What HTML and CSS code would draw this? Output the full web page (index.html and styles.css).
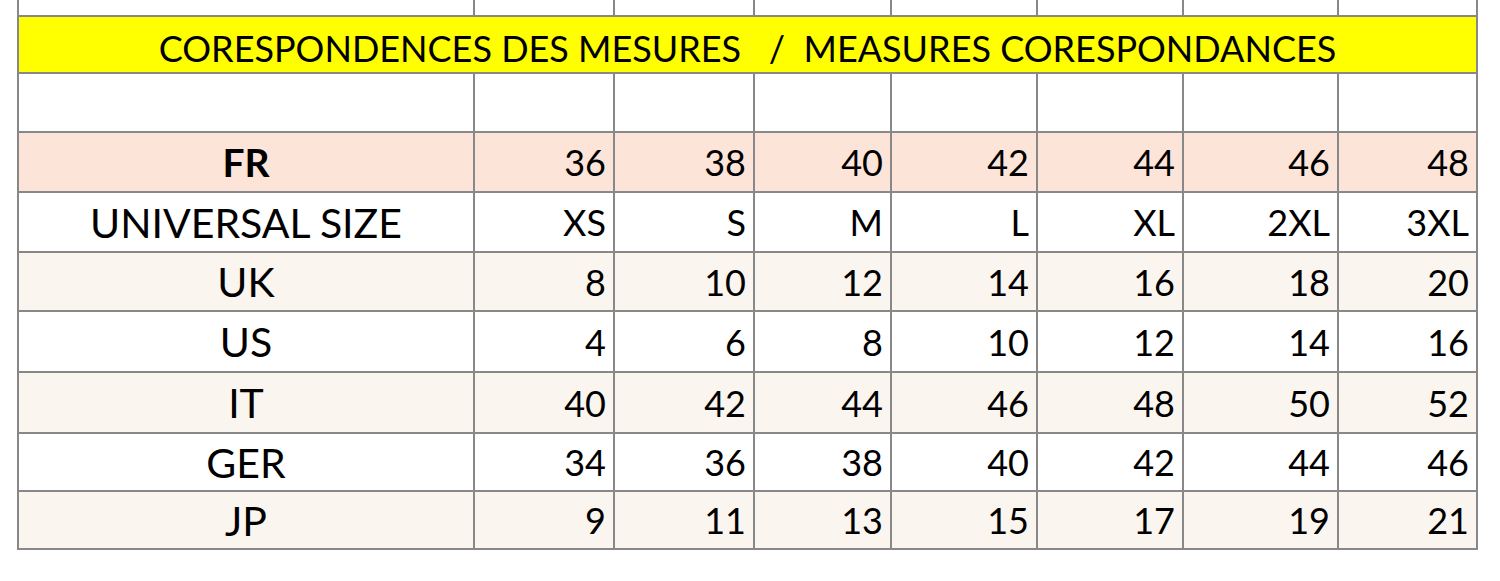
FILE: index.html
```html
<!DOCTYPE html>
<html>
<head>
<meta charset="utf-8">
<link rel="stylesheet" href="styles.css">
</head>
<body>
<table class="sizes">
  <colgroup>
    <col class="c-label"><col class="c1"><col class="c2"><col class="c3"><col class="c4"><col class="c5"><col class="c6"><col class="c7">
  </colgroup>
  <tr class="r-top"><td></td><td></td><td></td><td></td><td></td><td></td><td></td><td></td></tr>
  <tr class="r-title"><td colspan="8" class="title">CORESPONDENCES DES MESURES   /  MEASURES CORESPONDANCES</td></tr>
  <tr class="r-empty"><td></td><td></td><td></td><td></td><td></td><td></td><td></td><td></td></tr>
  <tr class="r-fr"><td class="label bold">FR</td><td>36</td><td>38</td><td>40</td><td>42</td><td>44</td><td>46</td><td>48</td></tr>
  <tr class="r-white"><td class="label">UNIVERSAL SIZE</td><td>XS</td><td>S</td><td>M</td><td>L</td><td>XL</td><td>2XL</td><td>3XL</td></tr>
  <tr class="r-cream"><td class="label">UK</td><td>8</td><td>10</td><td>12</td><td>14</td><td>16</td><td>18</td><td>20</td></tr>
  <tr class="r-white r-h61"><td class="label">US</td><td>4</td><td>6</td><td>8</td><td>10</td><td>12</td><td>14</td><td>16</td></tr>
  <tr class="r-cream r-h61"><td class="label">IT</td><td>40</td><td>42</td><td>44</td><td>46</td><td>48</td><td>50</td><td>52</td></tr>
  <tr class="r-white r-h58"><td class="label">GER</td><td>34</td><td>36</td><td>38</td><td>40</td><td>42</td><td>44</td><td>46</td></tr>
  <tr class="r-cream r-h58"><td class="label">JP</td><td>9</td><td>11</td><td>13</td><td>15</td><td>17</td><td>19</td><td>21</td></tr>
</table>
</body>
</html>
```
FILE: styles.css
```css
html, body {
  margin: 0;
  padding: 0;
  background: #ffffff;
}
body {
  padding-left: 17px;
  font-family: "Lato", "Open Sans", sans-serif;
  color: #000;
}
.sizes {
  border-collapse: collapse;
  table-layout: fixed;
  width: 1461px;
  font-size: 36px;
}
.c-label { width: 456px; }
.c1 { width: 140px; }
.c2 { width: 140px; }
.c3 { width: 137px; }
.c4 { width: 146px; }
.c5 { width: 146px; }
.c6 { width: 155px; }
.c7 { width: 139px; }
.sizes td {
  border: 2px solid #888888;
  padding: 0 7px 0 0;
  text-align: right;
  vertical-align: middle;
  line-height: 1;
  white-space: nowrap;
}
.sizes td.label {
  text-align: center;
  padding: 0;
  font-size: 41px;
}
.sizes td.bold {
  font-weight: 700;
  font-size: 39px;
}
.r-top td {
  border-top: none;
  height: 15px;
}
.r-title td {
  height: 57px;
  background: #ffff00;
  text-align: center;
  white-space: pre;
  padding: 7px 0 0 0;
  box-sizing: border-box;
}
.r-empty td { height: 57px; }
.r-fr td { height: 58px; background: #fce4d8; }
.r-white td { height: 58px; background: #ffffff; }
.r-cream td { height: 57px; background: #fbf5ef; }
.r-h61 td { height: 59px; }
.r-h58 td { height: 56px; }
```
